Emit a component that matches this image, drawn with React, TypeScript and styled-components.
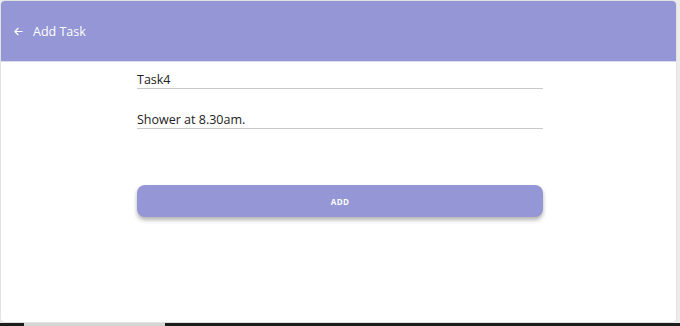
import React from 'react';
import styled, { createGlobalStyle } from 'styled-components';

const GlobalStyle = createGlobalStyle`
  html, body {
    margin: 0;
    padding: 0;
    background: #ececec;
    font-family: "Open Sans", "Noto Sans", sans-serif;
  }
`;

const Screen = styled.div`
  width: 680px;
  height: 326px;
  display: flex;
  flex-direction: column;
  overflow: hidden;
`;

const Card = styled.div`
  width: 677px;
  height: 323px;
  box-sizing: border-box;
  border: 1px solid #e2e2e2;
  border-radius: 5px;
  background: #ffffff;
  overflow: hidden;
  display: flex;
  flex-direction: column;
`;

const Header = styled.header`
  height: 60px;
  flex-shrink: 0;
  background: #9496d5;
  display: flex;
  align-items: center;
  padding: 0 0 0 12px;
  gap: 9px;
  color: #ffffff;
  border-bottom: 1px solid #dcdcec;
`;

const Title = styled.span`
  font-size: 12.5px;
  font-weight: 500;
`;

const Form = styled.div`
  width: 406px;
  margin: 0 0 0 136px;
  display: flex;
  flex-direction: column;
`;

const Field = styled.input<{ $gap: number }>`
  border: none;
  border-bottom: 1px solid #c8c8c8;
  outline: none;
  padding: 0 0 1px 0;
  height: 15px;
  line-height: 15px;
  font-family: inherit;
  font-size: 12.5px;
  color: #222222;
  background: transparent;
  margin-top: ${(p) => p.$gap}px;
`;

const AddButton = styled.button`
  margin-top: 56px;
  height: 32px;
  border: none;
  border-radius: 8px;
  background: #9496d5;
  color: #ffffff;
  font-family: inherit;
  font-size: 8px;
  font-weight: 700;
  letter-spacing: 0.3px;
  box-shadow: 0 3px 4px rgba(0, 0, 0, 0.3);
  cursor: pointer;
`;

const BottomBar = styled.div`
  height: 3px;
  background: #1c1c1c;
  display: flex;
  padding-left: 24px;
`;

const BarSegment = styled.div`
  width: 141px;
  background: #d6d6d6;
`;

const BackArrow = () => (
  <svg width="11" height="11" viewBox="0 0 24 24" fill="none" stroke="#ffffff" strokeWidth="2.6" strokeLinecap="round" strokeLinejoin="round">
    <path d="M20 12H5" />
    <path d="M11 5l-7 7 7 7" />
  </svg>
);

export default function App() {
  return (
    <>
      <GlobalStyle />
      <Screen>
        <Card>
          <Header>
            <BackArrow />
            <Title>Add Task</Title>
          </Header>
          <Form>
            <Field $gap={10} defaultValue="Task4" />
            <Field $gap={23} defaultValue="Shower at 8.30am." />
            <AddButton>ADD</AddButton>
          </Form>
        </Card>
        <BottomBar>
          <BarSegment />
        </BottomBar>
      </Screen>
    </>
  );
}
